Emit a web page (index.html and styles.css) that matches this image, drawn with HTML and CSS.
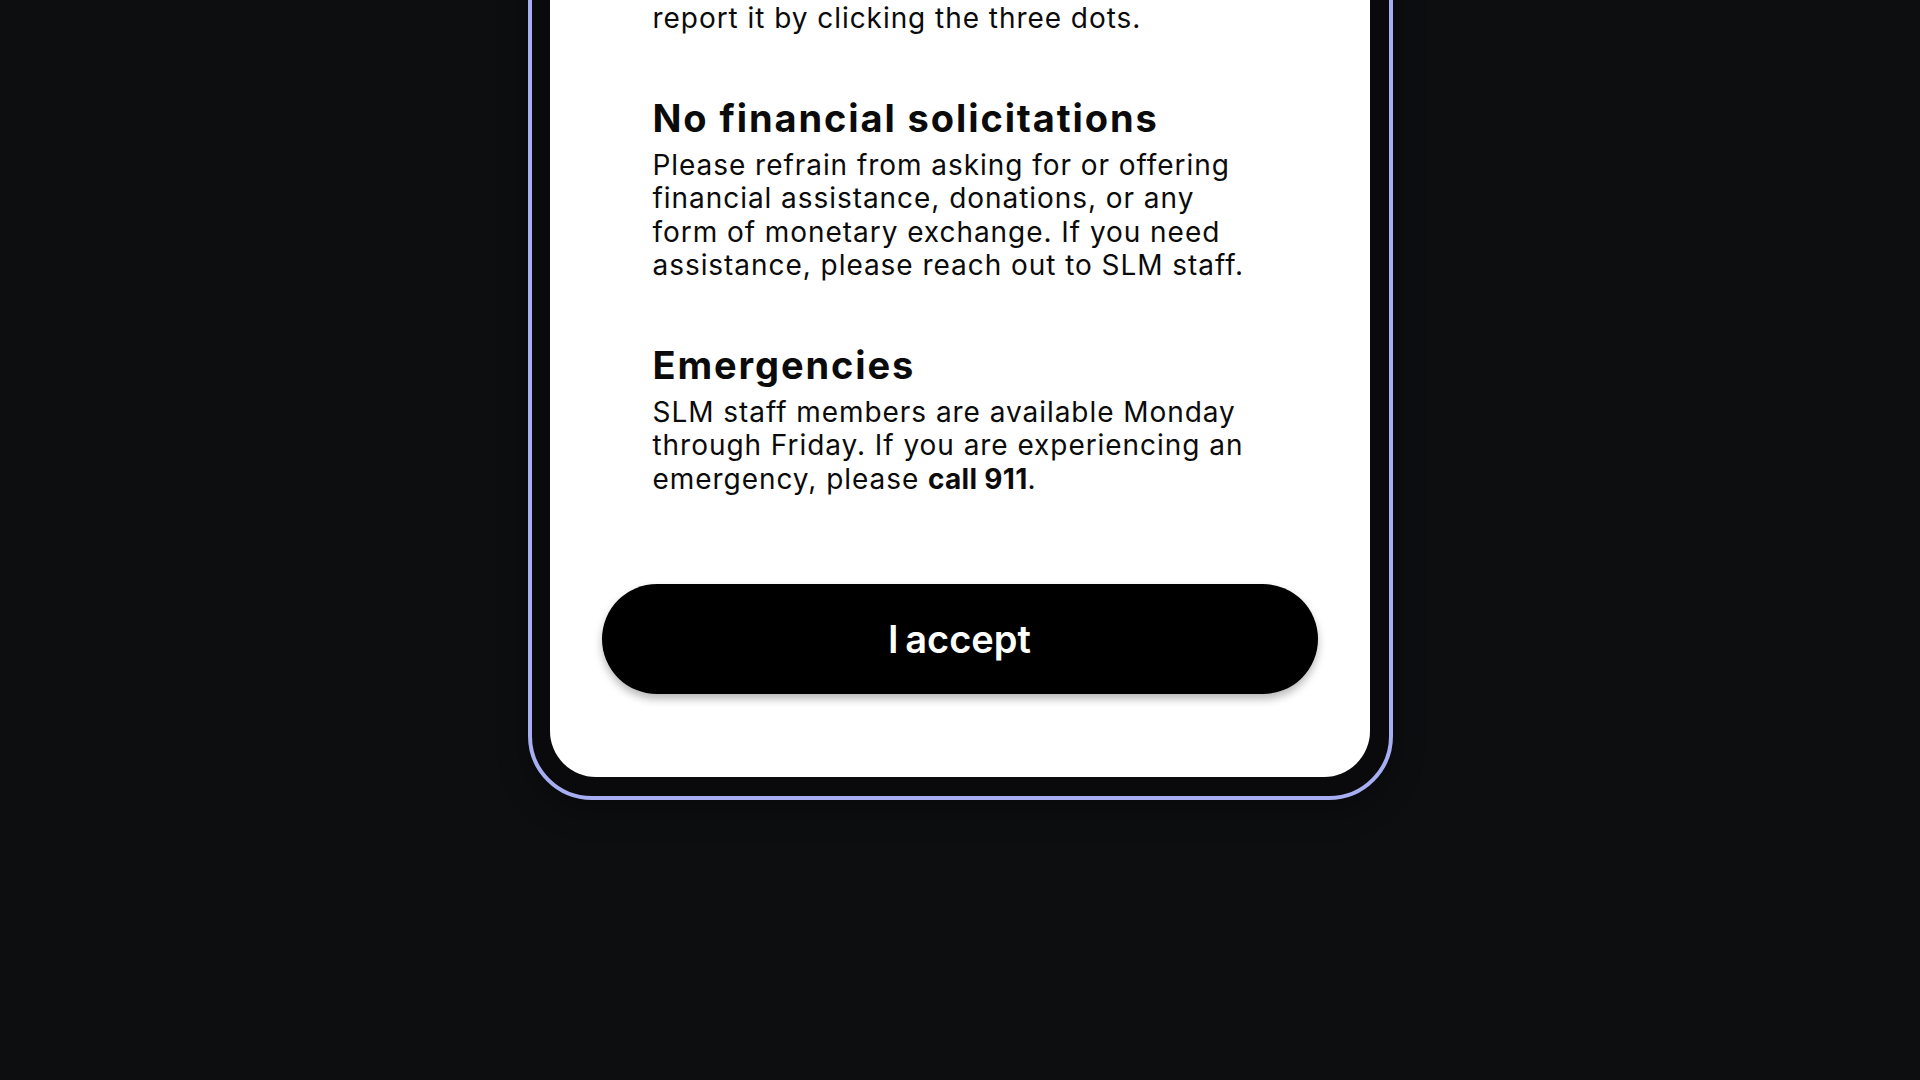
FILE: index.html
```html
<!DOCTYPE html>
<html lang="en">
<head>
<meta charset="utf-8">
<title>Community guidelines</title>
<link rel="stylesheet" href="styles.css">
</head>
<body>
<div class="stage">
  <div class="phone">
    <div class="screen">
      <p class="body">report it by clicking the three dots.</p>
      <section class="rule">
        <h2 class="title">No financial solicitations</h2>
        <p class="body">Please refrain from asking for or offering<br>financial assistance, donations, or any<br>form of monetary exchange. If you need<br>assistance, please reach out to SLM staff.</p>
      </section>
      <section class="rule">
        <h2 class="title">Emergencies</h2>
        <p class="body">SLM staff members are available Monday<br>through Friday. If you are experiencing an<br>emergency, please <strong>call 911</strong>.</p>
      </section>
      <button class="accept" type="button">I accept</button>
    </div>
  </div>
</div>
</body>
</html>
```

FILE: styles.css
```css
html, body {
  margin: 0;
  padding: 0;
}

body {
  background: #0d0e10;
  height: 1080px;
  overflow: hidden;
  font-family: "Inter", "Liberation Sans", sans-serif;
}

.stage {
  display: flex;
  justify-content: center;
}

.phone {
  margin-top: -117px;
  width: 820px;
  padding: 18px 19px 19px 18px;
  background: #0a0a0c;
  border: 4px solid #a7aef2;
  border-radius: 0 0 64px 64px;
  box-shadow: 0 10px 30px rgba(0, 0, 0, 0.35);
}

.screen {
  background: #ffffff;
  border-radius: 0 0 46px 46px;
  padding: 97px 52px 83px 52px;
  display: flex;
  flex-direction: column;
}

.body {
  margin: 0 51px;
  font-size: 28px;
  line-height: 33.5px;
  font-weight: 400;
  color: #0b0b0b;
  letter-spacing: 0.95px;
  white-space: nowrap;
}

.body strong {
  font-weight: 700;
  letter-spacing: 0.3px;
}

.rule {
  margin-top: 60px;
}

.title {
  margin: 0 51px 9px;
  font-size: 38px;
  line-height: 44px;
  font-weight: 700;
  color: #0b0b0b;
  letter-spacing: 1.9px;
}

.accept {
  margin-top: 88px;
  height: 110px;
  border: none;
  border-radius: 55px;
  background: #000000;
  color: #ffffff;
  font-family: "Inter", "Liberation Sans", sans-serif;
  font-size: 38px;
  font-weight: 600;
  word-spacing: -3px;
  box-shadow: 0 5px 9px rgba(0, 0, 0, 0.28);
  cursor: pointer;
}
```
